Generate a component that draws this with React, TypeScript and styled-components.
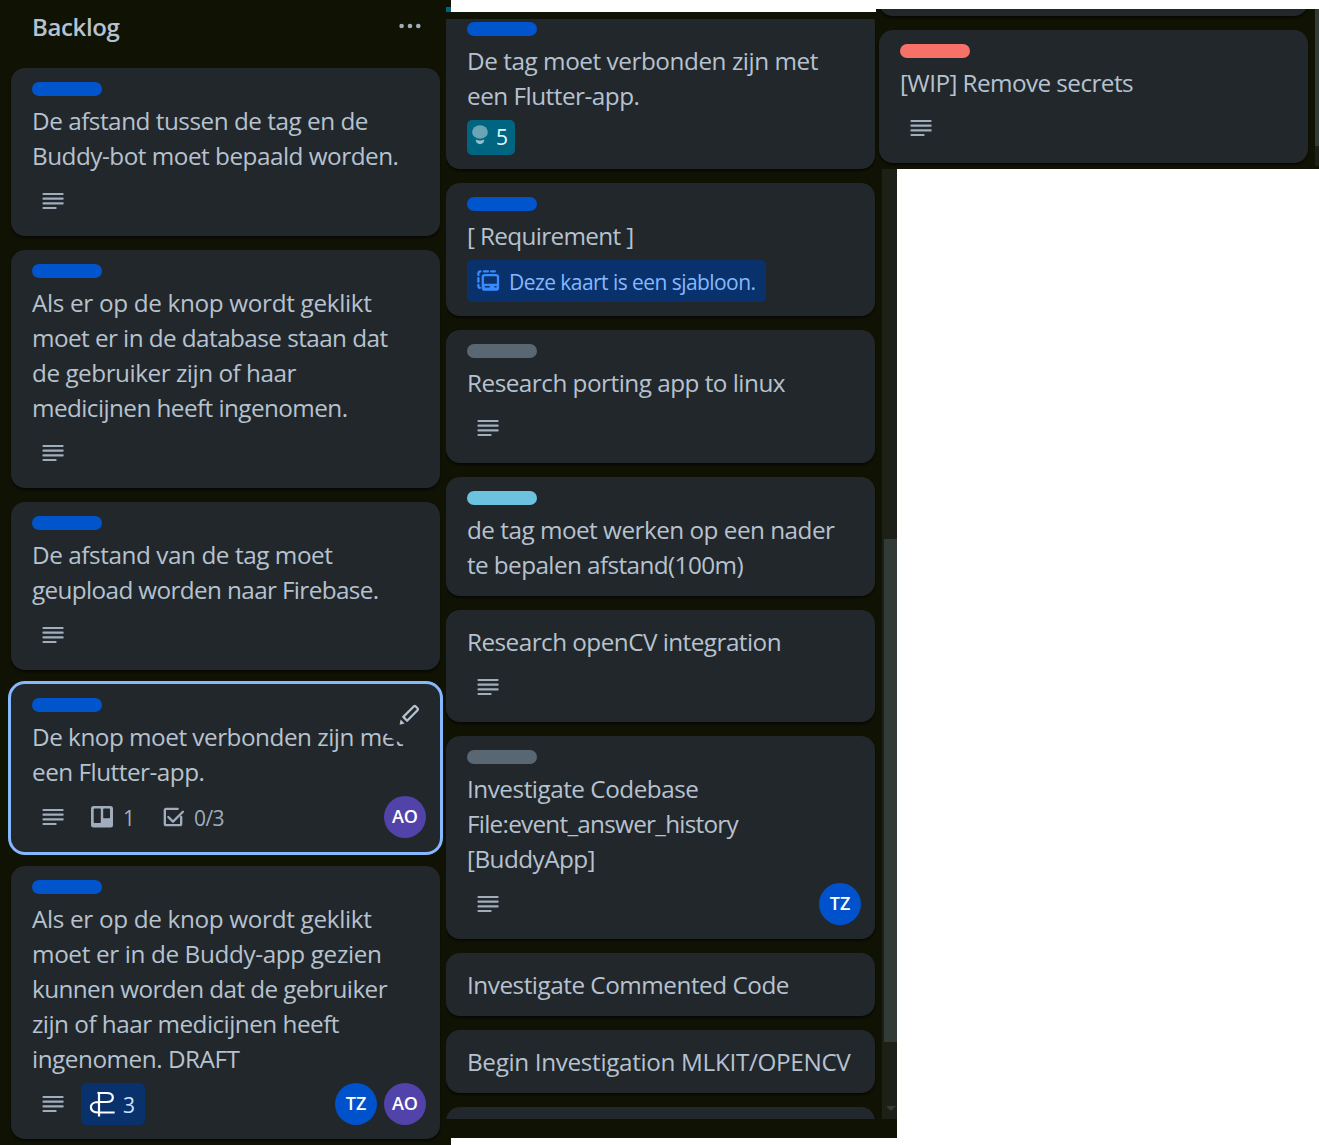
import React, { useLayoutEffect, useRef, useState } from "react";
import styled, { createGlobalStyle } from "styled-components";

const GlobalStyle = createGlobalStyle`
  *, *::before, *::after { box-sizing: border-box; }
  body { margin: 0; background: #fff; font-family: "Open Sans", "Noto Sans", sans-serif; color: #b6c2cf; }
`;

const Board = styled.main`
  display: flex;
  align-items: flex-start;
  width: 1319px;
  height: 1145px;
  overflow: hidden;
`;

const Pane = styled.section<{ $w: number; $h: number; $top?: number; $overlap?: number; $padTop?: number }>`
  position: relative;
  flex: none;
  display: flex;
  width: ${(p) => p.$w}px;
  height: ${(p) => p.$h}px;
  margin-top: ${(p) => p.$top ?? 0}px;
  margin-left: ${(p) => -(p.$overlap ?? 0)}px;
  padding-top: ${(p) => p.$padTop ?? 0}px;
  background: #101204;
  overflow: hidden;
`;

const List = styled.div<{ $left: number; $h?: number; $pull?: number }>`
  flex: none;
  display: flex;
  flex-direction: column;
  gap: 14px;
  width: 435px;
  height: ${(p) => (p.$h ? `${p.$h}px` : "auto")};
  padding-left: ${(p) => p.$left}px;
  overflow: ${(p) => (p.$h ? "hidden" : "visible")};
  & > :first-child { margin-top: ${(p) => -(p.$pull ?? 0)}px; }
`;

const MainList = styled.div`
  display: flex;
  flex-direction: column;
  gap: 14px;
  width: 440px;
  padding-left: 11px;
`;

const ListHeader = styled.header`
  display: flex;
  align-items: center;
  justify-content: space-between;
  height: 54px;
  padding: 0 16px 0 21px;
`;

const ListTitle = styled.h2`
  margin: 0;
  padding-bottom: 2px;
  font-size: 24px;
  font-weight: 600;
  line-height: 35px;
`;

const Card = styled.article<{ $selected?: boolean }>`
  position: relative;
  flex: none;
  width: 429px;
  padding: 14px 14px 14px 21px;
  border-radius: 14px;
  background: #22272b;
  box-shadow: ${(p) => (p.$selected ? "0 0 0 3px #85b8ff" : "0 2px 2px rgba(3, 4, 4, 0.65)")};
`;

const EmptyCard = styled(Card)`
  height: 63px;
`;

const Label = styled.div<{ $color: string }>`
  width: 70px;
  height: 14px;
  margin-bottom: 7px;
  border-radius: 7px;
  background: ${(p) => p.$color};
`;

const Line = styled.div`
  height: 35px;
  font-size: 24.3px;
  line-height: 35px;
  white-space: pre;
`;

const BadgeRow = styled.div`
  display: flex;
  gap: 7px;
  margin-top: 7px;
`;

const Badge = styled.div<{ $bg?: string; $color?: string; $drop?: number }>`
  display: flex;
  align-items: center;
  gap: 7px;
  height: 42px;
  padding: 0 7px;
  border-radius: 5px;
  background: ${(p) => p.$bg ?? "transparent"};
  color: ${(p) => p.$color ?? "#9fadbc"};
  font-size: 21px;
  line-height: 28px;
  white-space: pre;
  svg { flex: none; }
  span { margin-top: ${(p) => p.$drop ?? 2}px; }
`;

const PowerBadge = styled(Badge)`
  width: 64px;
`;

const TemplateBadge = styled(Badge)`
  width: 299px;
`;

const VoteBadge = styled(Badge)`
  width: 48px;
  height: 35px;
  gap: 8px;
  padding: 0 5px;
  line-height: 33px;
`;

const Members = styled.div`
  display: flex;
  gap: 7px;
  margin-left: auto;
`;

const Avatar = styled.span<{ $bg: string }>`
  width: 42px;
  height: 42px;
  border-radius: 50%;
  background: ${(p) => p.$bg};
  color: #fff;
  font-size: 18px;
  font-weight: 600;
  line-height: 41px;
  text-align: center;
`;

const EditButton = styled.button`
  position: absolute;
  top: 2px;
  right: 2px;
  display: grid;
  place-items: center;
  width: 58px;
  height: 58px;
  padding: 0;
  border: 0;
  border-radius: 50%;
  background: #22272b;
  color: #b6c2cf;
`;

const ScrollTrack = styled.div<{ $h: number }>`
  display: flex;
  flex-direction: column;
  align-items: flex-end;
  width: 15px;
  height: ${(p) => p.$h}px;
  background: #1d2017;
`;

const ScrollThumb = styled.div<{ $top: number; $h: number }>`
  flex: none;
  width: 13px;
  height: ${(p) => p.$h}px;
  margin-top: ${(p) => p.$top}px;
  background: #333b37;
`;

const ScrollArrow = styled.div`
  margin: 64px 1px 0 0;
  border: 5px solid transparent;
  border-top-color: #333b37;
  border-bottom: 0;
`;

const Spacer = styled.div<{ $w: number }>`
  flex: none;
  width: ${(p) => p.$w}px;
`;

const Indicator = styled.i`
  position: absolute;
  top: 7px;
  right: 0;
  width: 5px;
  height: 5px;
  background: #006580;
`;

/** A run of text whose tracking is adjusted so that it spans the given width. */
function Fit({ text, width }: { text: string; width: number }) {
  const ref = useRef<HTMLSpanElement>(null);
  const [spacing, setSpacing] = useState(0);
  useLayoutEffect(() => {
    const natural = ref.current!.getBoundingClientRect().width;
    setSpacing((width - natural) / text.length);
  }, []);
  return (
    <span ref={ref} style={{ letterSpacing: spacing }}>
      {text}
    </span>
  );
}

const DescriptionIcon = () => (
  <svg width="28" height="28" viewBox="0 0 28 28" fill="#9fadbc">
    <rect x="3.400" y="5.900" width="21.300" height="2.200" rx="1" />
    <rect x="3.400" y="10.600" width="21.300" height="2.200" rx="1" />
    <rect x="3.400" y="15.200" width="21.300" height="2.200" rx="1" />
    <rect x="3.400" y="19.900" width="14.300" height="2.200" rx="1" />
  </svg>
);

const BoardIcon = () => (
  <svg width="28" height="28" viewBox="0 0 28 28" fill="currentColor" fillRule="evenodd">
    <path d="M5.500 3h17a2.500 2.500 0 0 1 2.500 2.500v16.500a2.500 2.500 0 0 1-2.500 2.500h-17a2.500 2.500 0 0 1-2.500-2.500v-16.500a2.500 2.500 0 0 1 2.500-2.500zM6.500 5.500a.8.800 0 0 0-.8.800v12.900a.8.800 0 0 0 .8.800h5.500a.8.800 0 0 0 .8-.8v-12.900a.8.800 0 0 0-.8-.8zM16 5.500a.8.800 0 0 0-.8.800v8.200a.8.800 0 0 0 .8.800h5.200a.8.800 0 0 0 .8-.8v-8.200a.8.800 0 0 0-.8-.8z" />
  </svg>
);

const CheckIcon = () => (
  <svg width="28" height="28" viewBox="0 0 24 24" fill="currentColor" fillRule="evenodd">
    <path d="M6 4C4.895 4 4 4.895 4 6v12c0 1.105.895 2 2 2h12c1.105 0 2-.895 2-2v-6a1 1 0 1 0-2 0v6H6V6h10a1 1 0 1 0 0-2H6zM8.707 11.293a1 1 0 0 0-1.414 1.414l4 4a1 1 0 0 0 1.414 0l8.500-8.500a1 1 0 0 0-1.414-1.414L12 14.586l-3.293-3.293z" />
  </svg>
);

const PencilIcon = () => (
  <svg width="28" height="28" viewBox="0 0 28 28" fill="none" stroke="currentColor" strokeWidth="2.300" strokeLinejoin="round">
    <path d="M8.300 15.900 18.700 5.500a1.500 1.500 0 0 1 2.100 0l1.700 1.700a1.500 1.500 0 0 1 0 2.100L12.100 19.700z" />
    <path d="M5.600 18.500l4 4-5 1.200z" fill="currentColor" stroke="none" />
  </svg>
);

const TemplateIcon = () => (
  <svg width="28" height="28" viewBox="0 0 28 28" fill="none" stroke="#388bff" strokeWidth="2.300">
    <path d="M4.400 8V6.500a2.200 2.200 0 0 1 2-2.100M10 4.400h4M17.200 4.400h3.600M4.400 11.200v3.600M4.400 18v1.500a1.500 1.500 0 0 0 1.500 1.300" strokeLinecap="round" />
    <rect x="8.800" y="8.200" width="15.200" height="14.500" rx="2" />
    <path d="M9 16.700h15v5a1 1 0 0 1-1 1H10a1 1 0 0 1-1-1z" fill="#388bff" stroke="none" />
    <path d="M10.800 19.800h5M20.500 19.800h2" stroke="#09326c" strokeWidth="1.600" />
  </svg>
);

const PowerUpIcon = () => (
  <svg width="28" height="28" viewBox="0 0 28 28" fill="none" stroke="#fff" strokeWidth="2.200">
    <path d="M11 26.500V3h7.500c4.200 0 6.300 1.800 6.300 4.400 0 2.900-2.500 4.600-6.300 4.600H10C5.500 12 2.900 14.300 2.900 17.200c0 3.300 3.100 5.300 8.100 5.300h15.700" />
    <path d="M9.500 3h2" />
  </svg>
);

const BulbDrawing = styled.svg`
  margin-top: -6px;
`;

const BulbIcon = () => (
  <BulbDrawing width="16" height="22" viewBox="0 0 16 22">
    <ellipse cx="8" cy="8" rx="7.900" ry="6.800" fill="#6ba5b5" />
    <path d="M3.500 15.500q4.500 2.200 9 0l-1 3q-3.500 3.500-7 0z" fill="#8fc0cc" />
  </BulbDrawing>
);

const MoreIcon = () => (
  <svg width="28" height="28" viewBox="0 0 28 28" fill="#9fadbc">
    <circle cx="5.600" cy="13" r="2.300" />
    <circle cx="14" cy="13" r="2.300" />
    <circle cx="22.300" cy="13" r="2.300" />
  </svg>
);

const BLUE = "#0055cc";
const GREY = "#596773";

type CardData = {
  label?: string;
  lines: [string, number][];
  selected?: boolean;
  badges?: React.ReactNode;
};

const description = (
  <Badge>
    <DescriptionIcon />
  </Badge>
);

const ao = <Avatar $bg="#5243aa">AO</Avatar>;
const tz = <Avatar $bg="#0052cc">TZ</Avatar>;

const backlog: CardData[] = [
  {
    label: BLUE,
    lines: [["De afstand tussen de tag en de", 336], ["Buddy-bot moet bepaald worden.", 366.5]],
    badges: description,
  },
  {
    label: BLUE,
    lines: [
      ["Als er op de knop wordt geklikt", 339.5],
      ["moet er in de database staan dat", 355.5],
      ["de gebruiker zijn of haar", 264],
      ["medicijnen heeft ingenomen.", 315.5],
    ],
    badges: description,
  },
  {
    label: BLUE,
    lines: [["De afstand van de tag moet", 300.5], ["geupload worden naar Firebase.", 346.5]],
    badges: description,
  },
  {
    label: BLUE,
    selected: true,
    lines: [["De knop moet verbonden zijn met", 371], ["een Flutter-app.", 172.5]],
    badges: (
      <>
        {description}
        <Badge>
          <BoardIcon />
          <Fit text="1" width={15} />
        </Badge>
        <Badge>
          <CheckIcon />
          <Fit text="0/3" width={30} />
        </Badge>
        <Members>{ao}</Members>
      </>
    ),
  },
  {
    label: BLUE,
    lines: [
      ["Als er op de knop wordt geklikt", 339.5],
      ["moet er in de Buddy-app gezien", 349.5],
      ["kunnen worden dat de gebruiker", 355],
      ["zijn of haar medicijnen heeft", 307],
      ["ingenomen. DRAFT", 207.5],
    ],
    badges: (
      <>
        {description}
        <PowerBadge $bg="#09326c" $color="#cce0ff">
          <PowerUpIcon />
          <Fit text="3" width={11.5} />
        </PowerBadge>
        <Members>
          {tz}
          {ao}
        </Members>
      </>
    ),
  },
];

const requirements: CardData[] = [
  {
    label: BLUE,
    lines: [["De tag moet verbonden zijn met", 351], ["een Flutter-app.", 172.5]],
    badges: (
      <VoteBadge $bg="#006580" $color="#e3fafc" $drop={0}>
        <BulbIcon />
        <Fit text="5" width={11.5} />
      </VoteBadge>
    ),
  },
  {
    label: BLUE,
    lines: [["[ Requirement ]", 166.5]],
    badges: (
      <TemplateBadge $bg="#09326c" $color="#85b8ff">
        <TemplateIcon />
        <Fit text="Deze kaart is een sjabloon." width={246.5} />
      </TemplateBadge>
    ),
  },
  { label: GREY, lines: [["Research porting app to linux", 318]], badges: description },
  {
    label: "#6cc3e0",
    lines: [["de tag moet werken op een nader", 367.5], ["te bepalen afstand(100m)", 276]],
  },
  { lines: [["Research openCV integration", 314]], badges: description },
  {
    label: GREY,
    lines: [["Investigate Codebase", 231.5], ["File:event_answer_history", 271], ["[BuddyApp]", 128]],
    badges: (
      <>
        {description}
        <Members>{tz}</Members>
      </>
    ),
  },
  { lines: [["Investigate Commented Code", 322]] },
  { lines: [["Begin Investigation MLKIT/OPENCV", 383.5]] },
];

const wip: CardData = {
  label: "#f87168",
  lines: [["[WIP] Remove secrets", 233]],
  badges: description,
};

function TaskCard({ label, lines, selected, badges }: CardData) {
  return (
    <Card $selected={selected}>
      {label && <Label $color={label} />}
      {lines.map(([text, width]) => (
        <Line key={text}>
          <Fit text={text} width={width} />
        </Line>
      ))}
      {badges && <BadgeRow>{badges}</BadgeRow>}
      {selected && (
        <EditButton aria-label="Edit">
          <PencilIcon />
        </EditButton>
      )}
    </Card>
  );
}

export default function App() {
  return (
    <>
      <GlobalStyle />
      <Board>
        <Pane $w={451} $h={1145}>
          <MainList>
            <ListHeader>
              <ListTitle>
                <Fit text="Backlog" width={87.5} />
              </ListTitle>
              <MoreIcon />
            </ListHeader>
            {backlog.map((card, i) => (
              <TaskCard key={i} {...card} />
            ))}
          </MainList>
          <Indicator />
        </Pane>
        <Pane $w={451} $h={1126} $top={12} $overlap={5} $padTop={7}>
          <List $left={0} $h={1100} $pull={11}>
            {requirements.map((card, i) => (
              <TaskCard key={i} {...card} />
            ))}
            <EmptyCard />
          </List>
          <Spacer $w={1} />
          <ScrollTrack $h={1100}>
            <ScrollThumb $top={520} $h={503} />
            <ScrollArrow />
          </ScrollTrack>
        </Pane>
        <Pane $w={443} $h={160} $top={9} $overlap={21}>
          <List $left={3} $pull={56}>
            <EmptyCard />
            <TaskCard {...wip} />
          </List>
          <Spacer $w={4} />
          <ScrollTrack $h={157}>
            <ScrollThumb $top={0} $h={137} />
          </ScrollTrack>
        </Pane>
      </Board>
    </>
  );
}
